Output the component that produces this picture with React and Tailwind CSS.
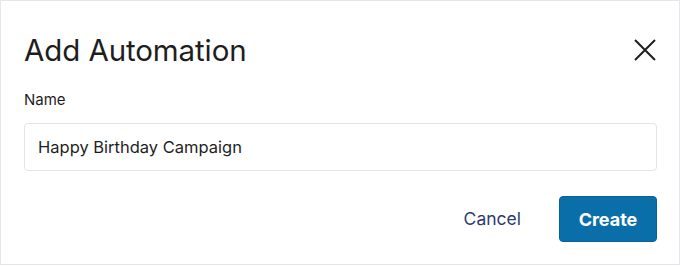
export default function App() {
    return (
        <div className="w-[680px] h-[267px] bg-white" style={{ fontFamily: 'Inter, "Liberation Sans", sans-serif' }}>
            <div className="w-[680px] h-[265px] border border-[#e6e6ea] bg-white pl-[23px] pr-[22px] pt-[32px]">
                <div className="flex items-center justify-between">
                    <h2 className="text-[29.5px] leading-[34px] text-[#1e1e1e] tracking-[-0.1px]">Add Automation</h2>
                    <button className="w-[24px] h-[24px] flex items-center justify-center text-[#1e1e1e]">
                        <svg width="24" height="24" viewBox="0 0 24 24" fill="none" stroke="currentColor" strokeWidth="2">
                            <path d="M2 2 L22 22 M22 2 L2 22" />
                        </svg>
                    </button>
                </div>
                <label className="block mt-[23px] text-[15px] leading-[20px] text-[#1e1e1e]">Name</label>
                <div className="mt-[13px] h-[48px] border border-[#e2e4ea] rounded-[4px] flex items-center px-[13px] text-[16.5px] text-[#1e1e1e]">
                    Happy Birthday Campaign
                </div>
                <div className="flex justify-end items-center mt-[25px] gap-[38px]">
                    <button className="text-[17.5px] text-[#2f3b6b]">Cancel</button>
                    <button className="w-[98px] h-[46px] rounded-[4px] bg-[#0a6ea9] border border-[#08629a] text-white text-[18px] font-bold">Create</button>
                </div>
            </div>
        </div>
    )
}
